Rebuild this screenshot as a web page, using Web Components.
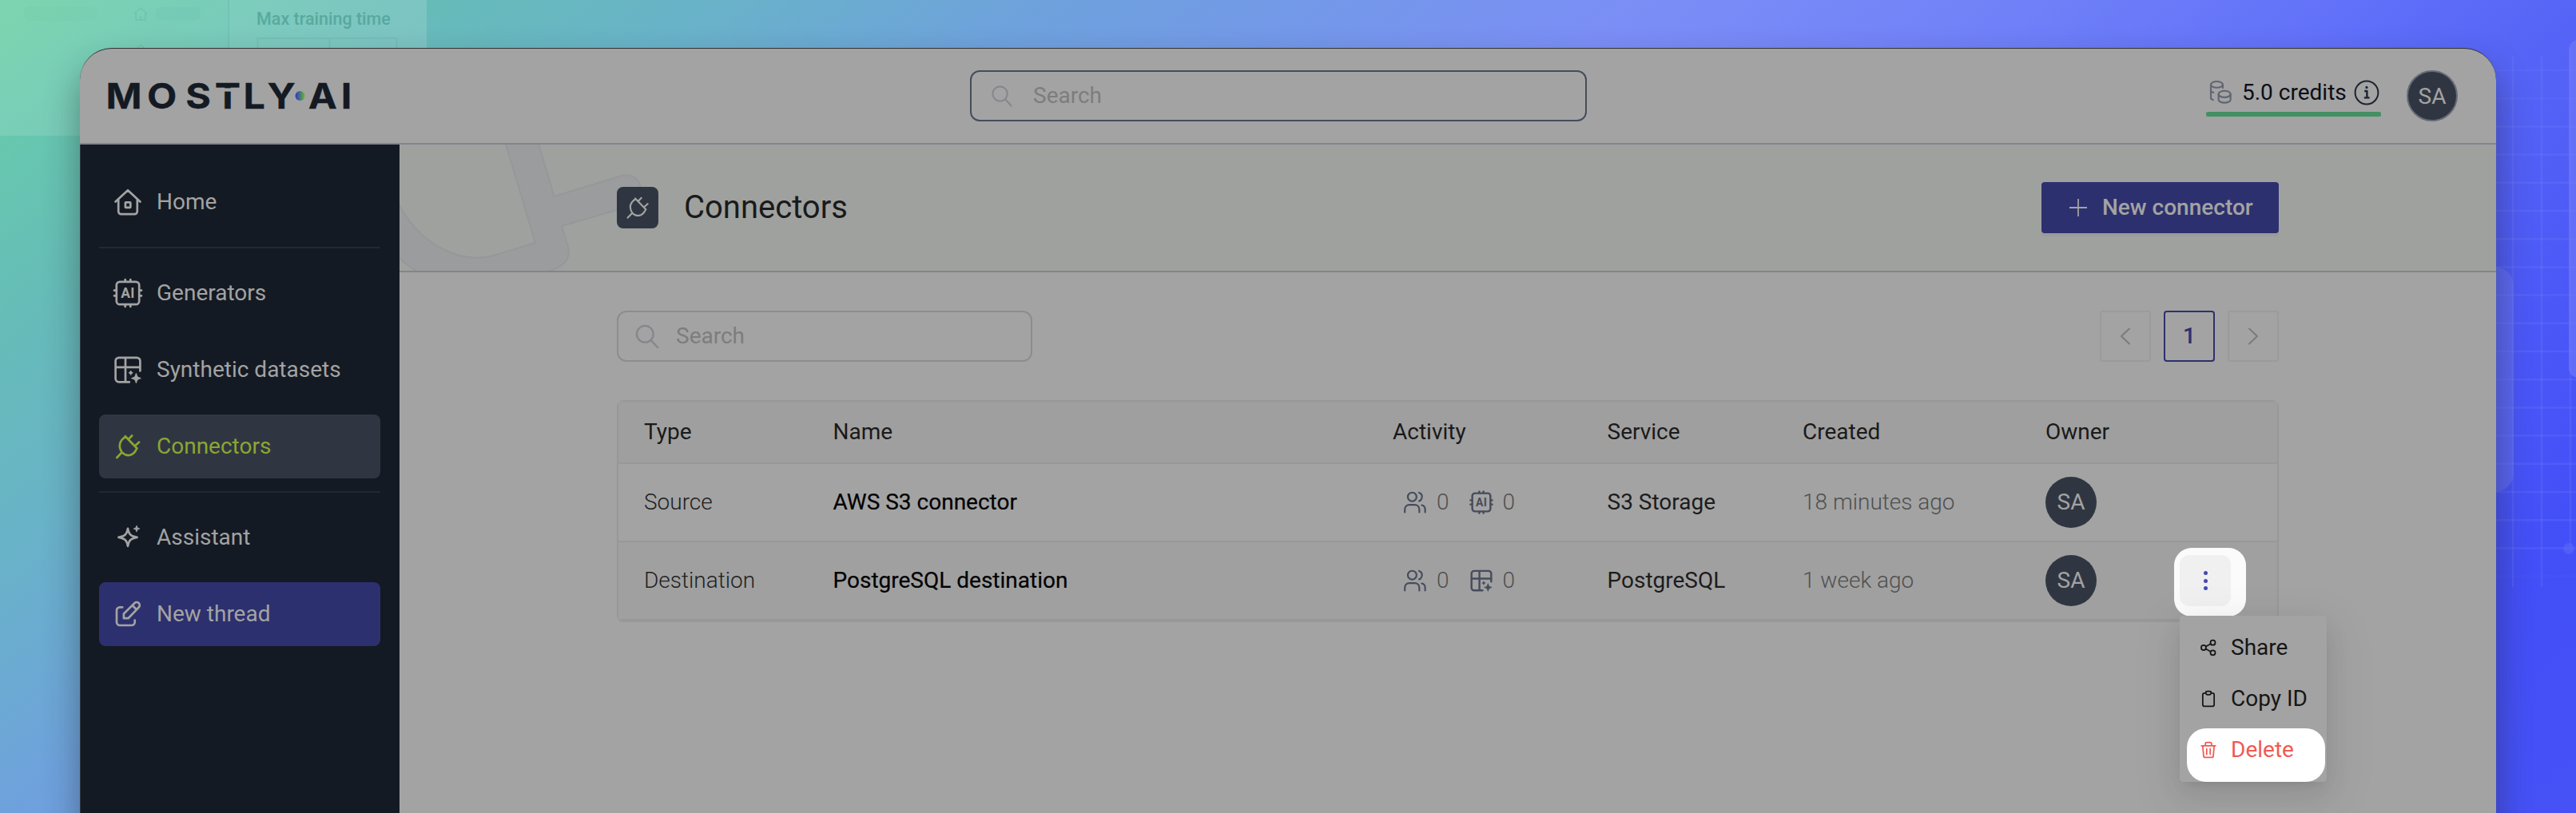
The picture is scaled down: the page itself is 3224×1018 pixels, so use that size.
<!DOCTYPE html>
<html lang="en">
<head>
<meta charset="utf-8">
<title>Connectors</title>
<style>
html,body{margin:0;height:100%;overflow:hidden}
body{font-family:Roboto,"Liberation Sans",sans-serif;font-size:28px;line-height:34px;color:#1c1c1c}
</style>
</head>
<body>
<desktop-stage>
  <app-window>
    <app-header slot="header"></app-header>
    <side-nav slot="nav">
      <nav-item icon="home">Home</nav-item>
      <nav-divider></nav-divider>
      <nav-item icon="chip">Generators</nav-item>
      <nav-item icon="table">Synthetic datasets</nav-item>
      <nav-item icon="plug" active>Connectors</nav-item>
      <nav-divider></nav-divider>
      <nav-item icon="spark">Assistant</nav-item>
      <nav-item icon="edit" primary>New thread</nav-item>
    </side-nav>
    <page-header slot="main">Connectors</page-header>
    <connector-page slot="main"></connector-page>
  </app-window>
</desktop-stage>
<script>
const ICONS = {
  home: '<path d="M4.6 19.6 20 5.2l15.4 14.4M8.2 17.5v14.3a3.4 3.4 0 0 0 3.4 3.4h16.8a3.4 3.4 0 0 0 3.4-3.4V17.5"/><rect x="16.9" y="20.3" width="6.4" height="6.6" rx=".6"/>',
  chip: '<rect x="5.8" y="5.8" width="28.4" height="28.4" rx="4.2"/><path d="M16.7 3v2M23.3 3v2M16.7 35v2M23.3 35v2M3 16.7h2M3 23.3h2M35 16.7h2M35 23.3h2"/><text x="20" y="26.200" text-anchor="middle" font-family="Roboto" font-weight="700" font-size="17.500" letter-spacing=".4" fill="currentColor" stroke="none">AI</text>',
  table: '<path d="M35.4 21.5V9a4.2 4.2 0 0 0-4.2-4.2H8.8A4.2 4.2 0 0 0 4.6 9v22.2a4.2 4.2 0 0 0 4.2 4.2h13M17 4.8v30.6M4.6 16.8h30.8"/><path fill="currentColor" stroke-width="1.400" d="M30.4 25c.8 3.8 1.700 4.800 5.500 5.600-3.800.8-4.700 1.800-5.500 5.600-.8-3.800-1.700-4.800-5.500-5.600 3.800-.8 4.700-1.800 5.500-5.600ZM23.700 21.600c.3 1.500.7 1.900 2.100 2.200-1.400.3-1.800.7-2.100 2.200-.3-1.500-.7-1.900-2.100-2.200 1.400-.3 1.800-.7 2.100-2.200Z"/>',
  plug: '<path d="M16.700 7.200 31.500 22.500M16.900 8.200C9 13 8 20.500 12.600 27.400c5.600 5.800 13.500 5 18-3.600M6.300 34l6.300-6.600M20.800 11.200l4.400-4.700M28.800 19.400l5.200-4.700"/>',
  spark: '<path d="M20 8.800c1.300 7.400 3.600 9.700 11.600 11-8 1.300-10.300 3.700-11.600 11-1.300-7.300-3.600-9.700-11.600-11 8-1.300 10.300-3.600 11.600-11Z"/><path fill="currentColor" stroke-width="1.200" d="M31 5.400c.6 2.500 1 3 3.600 3.600-2.600.6-3 1.100-3.600 3.600-.6-2.500-1-3-3.600-3.600 2.600-.6 3-1.100 3.600-3.600Z"/>',
  edit: '<path d="M13.200 11.400H10a4 4 0 0 0-4 4V30a4 4 0 0 0 4 4h14.700a4 4 0 0 0 4-4v-2.500M14.900 25.200V19.500L28.400 6.200a3.700 3.700 0 0 1 5.300 5.300L20.500 25.200ZM25.600 9l5.300 5.300"/>',
  search: '<circle cx="17" cy="17" r="11.500"/><path d="m25 25.400 9.600 10.200"/>',
  coins: '<ellipse cx="13.500" cy="7.600" rx="9.600" ry="5"/><path d="M3.900 7.600V29c0 1.700 1.300 2.800 3.600 3.300M3.900 18c.8 1.400 2.200 2 4.200 2.400M23.100 7.600V13"/><ellipse cx="26" cy="23" rx="9.700" ry="5.300"/><path d="M16.300 23v9c0 2.800 4.300 5 9.700 5s9.700-2.200 9.700-5V23"/>',
  info: '<circle cx="20" cy="20" r="18"/><path stroke-width="3" stroke-linecap="butt" d="M16.500 17.500h4v10M16 28h8.500"/><circle cx="20" cy="11.800" r="1.300" fill="currentColor" stroke-width="1.500"/>',
  people: '<circle cx="15.500" cy="11.500" r="6.800"/><path d="M4 35.500v-4.200c0-4.500 3-7.300 7.200-7.300h8.300c4.300 0 7.200 2.800 7.200 7.300v4.200M26.300 4.900c5.700 1.700 6.500 10.800 0 13.200M30.500 24.400c3.400.8 5.300 3.300 5.300 6.900v4.200"/>',
  share: '<circle cx="9" cy="20" r="5.500"/><circle cx="30" cy="8.500" r="5.500"/><circle cx="30" cy="31.500" r="5.500"/><path d="m14 17.300 11.200-6.100M14 22.700l11.200 6.200"/>',
  clip: '<path d="M14 7h-3a4 4 0 0 0-4 4v22a4 4 0 0 0 4 4h18a4 4 0 0 0 4-4V11a4 4 0 0 0-4-4h-3M14 5.500c0-1.500.8-2.500 2.500-2.500h7c1.700 0 2.500 1 2.500 2.500S25 10.500 22 10.500h-4c-3 0-4-3.500-4-5Z"/>',
  trash: '<path d="M4 10.500h32M13 10V6a3 3 0 0 1 3-3h8a3 3 0 0 1 3 3v4M7 11l2 23a3 3 0 0 0 3 3h16a3 3 0 0 0 3-3l2-23M16 17.500v12.500M24 17.500v12.500"/>',
  plus: '<path stroke-linecap="butt" d="M20 0v40M0 20h40"/>',
  left: '<path d="M30 1 10 20l20 19"/>',
  right: '<path d="m10 1 20 19-20 19"/>'
};

function define(name, render) {
  customElements.define(name, class extends HTMLElement {
    connectedCallback() {
      if (this.shadowRoot) return;
      const t = document.createElement('template');
      t.innerHTML = render(this);
      this.attachShadow({mode: 'open'}).append(t.content.cloneNode(true));
    }
  });
}

define('ui-icon', el => `<style>:host{display:block;flex:none;width:${el.getAttribute('size') || 40}px;height:${el.getAttribute('size') || 40}px}
svg{display:block;width:100%;height:100%;overflow:visible}</style>
<svg viewBox="0 0 40 40" fill="none" stroke="currentColor" stroke-width="${el.getAttribute('weight') || 2.7}" stroke-linecap="round" stroke-linejoin="round">${ICONS[el.getAttribute('name')]}</svg>`);

define('desktop-stage', () => {
  let grid = '';
  for (let i = 0; i < 19; i++) grid += `<path d="M3110 ${88 + i * 35.2}H3224" opacity="${i > 17 ? .25 : i < 2 ? .6 : 1}"/>`;
  return `<style>:host{display:block;position:relative;box-sizing:border-box;height:1018px;padding:60px 100px 0;overflow:hidden;
background:linear-gradient(142deg,#6acfa4 0%,#67c7af 5.600%,#66bcb8 11.700%,#69b2c9 20%,#6ea2dc 28.700%,#7497ea 37.600%,#7b8ef6 45.500%,#7182f8 55.300%,#606ff9 66.300%,#5766f6 70.700%,#4c59f7 80.600%,#434ff7 90%,#4652f6 100%)}
.art{position:absolute;left:0;top:0}</style>
<svg class="art" width="3224" height="1018" fill="none">
<rect width="534" height="170" fill="#fff" opacity=".12"/><rect x="286" width="248" height="170" fill="#fff" opacity=".03"/>
<path d="M286 0v60" stroke="#5fa79c" stroke-width="2" opacity=".25"/>
<rect x="195" y="9" width="56" height="16" rx="6" fill="#6cc4ae" opacity=".25"/><rect x="30" y="8" width="92" height="18" rx="8" fill="#6cc8a8" opacity=".12"/>
<path d="m168 17 8-7 8 7M170 16v9h12v-9M176 20v5M168 64l8-8 8 8" stroke="#5fae9c" stroke-width="1.500" opacity=".35"/>
<path d="M322.500 62V48h174v14M412.500 48v14" stroke="#5fae9f" stroke-width="2" opacity=".3"/>
<text x="321" y="31" font-size="21.500" font-weight="500" fill="#4d9f93" opacity=".75">Max training time</text>
<g stroke="#7c88ff" stroke-width="2.500" stroke-opacity=".2">${grid}<path d="M3145 70V735M3181 70V735M3217 60V690"/></g>
<circle cx="3215" cy="687" r="7" fill="#5e6bfb" opacity=".5"/>
<rect x="3060" y="334" width="86" height="282" rx="24" fill="#717bee" opacity=".42"/>
<rect x="3215" y="50" width="60" height="423" rx="12" fill="#727cf8" opacity=".6"/>
</svg><slot></slot>`;
});

define('app-window', () => `<style>:host{display:flex;flex-direction:column;position:relative;height:1010px;background:#a3a3a3;border-top:1px solid #333;border-radius:40px 40px 0 0;overflow:hidden;box-sizing:border-box;box-shadow:0 24px 44px rgba(30,30,30,.42)}
.body{display:flex;flex:1}.main{flex:1;display:flex;flex-direction:column}</style>
<slot name="header"></slot><div class="body"><slot name="nav"></slot><div class="main"><slot name="main"></slot></div></div>`);

define('brand-logo', () => `<style>:host{display:block}svg{display:block;overflow:visible}</style>
<svg width="310" height="72" viewBox="132 84 310 72"><defs><linearGradient id="g"><stop offset=".15" stop-color="#3d43b4"/><stop offset=".55" stop-color="#43807a"/><stop offset="1" stop-color="#7fae2c"/></linearGradient></defs>
<text transform="scale(1.1 1)" y="136" x="120.500 167.300 211.200 244.400 276.900 304.100 333 350.600 387.900" font-family="Inter" font-weight="700" font-size="44" fill="#141a23" stroke="#141a23" stroke-width=".3">MOSTLY AI</text>
<rect x="267" y="110.400" width="35" height="4.200" fill="#a3a3a3"/><circle cx="375.500" cy="120" r="6" fill="url(#g)"/></svg>`);

define('search-box', el => `<style>:host{display:flex;align-items:center;box-sizing:border-box;height:64px;border:2px solid ${el.hasAttribute('strong') ? '#454d5b' : '#8d8d8d'};border-radius:12px;color:#7d7d7d}
ui-icon{color:#86868d}</style><ui-icon name="search" size="${el.hasAttribute('strong') ? 32 : 36}" weight="2.600"></ui-icon><span>Search</span>`);

define('user-avatar', el => `<style>:host{display:flex;flex:none;align-items:center;justify-content:center;box-sizing:border-box;width:64px;height:64px;border-radius:50%;background:#303641;color:#a3a3a3;${el.hasAttribute('ring') ? 'border:2px solid #666c76;padding-top:2px' : ''}}</style>SA`);

define('app-header', () => `<style>:host{display:flex;align-items:center;box-sizing:border-box;height:120px;flex:none;padding:0 48px 0 32px;border-bottom:2px solid #84848b}
brand-logo{width:1082px;flex:none}
search-box{width:772px;padding-left:22px;gap:23px}
.credits{margin-left:auto;width:219px;padding-top:4px;box-sizing:border-box}
.row{display:flex;align-items:center;height:34px;padding-left:3px;color:#0c0d16;gap:9px}
.row ui-icon+span{margin-left:2px}
.bar{height:6px;border-radius:2px;background:#449063;margin-top:7px}
user-avatar{margin-left:32px}</style>
<brand-logo></brand-logo><search-box strong></search-box>
<div class="credits"><div class="row"><ui-icon name="coins" size="31" weight="2.800" style="color:#5f6672"></ui-icon><span>5.0 credits</span><ui-icon name="info" size="32" weight="2.500" style="color:#1d2430"></ui-icon></div><div class="bar"></div></div>
<user-avatar ring></user-avatar>`);

define('side-nav', () => `<style>:host{display:flex;flex-direction:column;gap:16px;box-sizing:border-box;width:400px;flex:none;padding:32px 24px 32px 23px;background:#141a23;border-left:1px solid #33383f}</style><slot></slot>`);

define('nav-divider', () => `<style>:host{display:block;height:2px;background:#222833}</style>`);

define('nav-item', el => `<style>:host{display:flex;align-items:center;gap:16px;height:80px;padding:0 16px;border-radius:8px;color:#a3a3a3}
:host([active]){background:#303641;color:#8ca534}:host([primary]){background:#2d306e}</style>
<ui-icon name="${el.getAttribute('icon')}"></ui-icon><span><slot></slot></span>`);

define('page-header', () => `<style>:host{display:flex;position:relative;align-items:center;box-sizing:border-box;height:160px;padding:0 272px 0;background:#9fa19f;border-bottom:2px solid #84848b;overflow:hidden;flex:none}
.mark{position:absolute;left:0;top:0}
.tile{position:relative;display:flex;align-items:center;justify-content:center;width:52px;height:52px;border-radius:8px;background:#303641;color:#a3a3a3;margin-right:32px}
h1{position:relative;margin:0;font-weight:400;font-size:40px;line-height:48px;color:#1a1a1a}
.btn{margin-left:auto;display:flex;align-items:center;box-sizing:border-box;width:297px;height:64px;padding-left:35px;gap:19px;border-radius:4px;background:#2d306e;color:#a3a3a3;font-weight:500;box-shadow:0 4px 0 rgba(0,0,0,.03)}</style>
<svg class="mark" width="340" height="160" viewBox="500 181 340 160"><path d="M632 177 670 304 624 318C576 334 524 306 496 250V320Q508 331 523 341H682Q717 332 711 309L703 283 772 263 802 250V234Q796 216 778 220L693.500 246 673 177Z" fill="#9b9c9e" stroke="#969799" stroke-width="2"/></svg>
<div class="tile"><ui-icon name="plug" size="36" weight="2.400"></ui-icon></div><h1><slot></slot></h1>
<div class="btn"><ui-icon name="plus" size="22" weight="3.200"></ui-icon><span>New connector</span></div>`);

define('page-box', () => `<style>:host{display:flex;align-items:center;justify-content:center;box-sizing:border-box;width:64px;height:64px;border:2px solid #9b9b9b;border-radius:4px;color:#7b7b7b}
:host([current]){border-color:#2d306e;color:#2d306e;font-weight:500}</style><slot></slot>`);

define('connector-page', () => `<style>:host{display:flex;flex-direction:column;gap:48px;padding:48px 272px}
.tools{display:flex;align-items:center;gap:16px}
search-box{width:520px;padding-left:18px;gap:18px;margin-right:auto}</style>
<div class="tools"><search-box></search-box><page-box><ui-icon name="left" size="20" weight="4"></ui-icon></page-box><page-box current>1</page-box><page-box><ui-icon name="right" size="20" weight="4"></ui-icon></page-box></div>
<connector-table></connector-table>`);

const rows = [
  ['Source', 'AWS S3 connector', 'chip', 'S3 Storage', '18 minutes ago'],
  ['Destination', 'PostgreSQL destination', 'table', 'PostgreSQL', '1 week ago']
];
define('connector-table', () => `<style>:host{display:block;border:2px solid #989898;border-bottom-width:4px;border-radius:8px}
.row{display:grid;grid-template-columns:236.500px 700.500px 268.500px 244.500px 304px 168px 64px;align-items:center;height:96px;padding-left:32px}
.row+.row{border-top:2px solid #989898}
.head{height:76px;background:#9f9f9f;color:#1a1a1a}
.alt{background:#a0a0a0}
.type{font-weight:300;color:#1f1f1f}.name{color:#000;-webkit-text-stroke:.2px #000}.ago{font-weight:300;color:#505050}
.act{display:flex;align-items:center;padding-left:12px;color:#505050;font-weight:300}
.act ui-icon{margin-right:11px;color:#454c5b}.act ui-icon+span{margin-right:24px}</style>
<div class="row head"><span>Type</span><span>Name</span><span>Activity</span><span>Service</span><span>Created</span><span>Owner</span></div>
${rows.map((r, i) => `<div class="row${i ? ' alt' : ''}"><span class="type">${r[0]}</span><span class="name">${r[1]}</span>
<div class="act"><ui-icon name="people" size="32"></ui-icon><span>0</span><ui-icon name="${r[2]}" size="32" weight="3"></ui-icon><span>0</span></div>
<span>${r[3]}</span><span class="ago">${r[4]}</span><user-avatar></user-avatar>${i ? '<row-actions></row-actions>' : ''}</div>`).join('')}`);

define('row-actions', () => `<style>:host{display:block;position:relative;width:64px;height:64px}
.spot{position:absolute;left:-7px;top:-9px;width:90px;height:86px;border-radius:22px;background:#fbfbfb}
.btn{position:relative;display:flex;flex-direction:column;align-items:center;justify-content:center;gap:4.300px;width:64px;height:64px;border-radius:12px;background:#f0f0f0}
.btn i{width:5px;height:5px;border-radius:50%;background:#434bb2}
.menu{position:absolute;left:0;top:76px;width:184px;box-sizing:border-box;padding:8px 0;border-radius:4px;background:#a3a3a3;box-shadow:0 12px 32px rgba(0,0,0,.08),0 6px 12px -8px rgba(0,0,0,.12),0 18px 56px 16px rgba(0,0,0,.05)}</style>
<div class="spot"></div><div class="btn"><i></i><i></i><i></i></div>
<div class="menu"><menu-item icon="share">Share</menu-item><menu-item icon="clip">Copy ID</menu-item><menu-item icon="trash" danger>Delete</menu-item></div>`);

define('menu-item', el => `<style>:host{display:flex;position:relative;align-items:center;gap:17px;height:64px;padding-left:25px;color:#161616}
:host([danger]){color:#f05a54}
:host([danger])::before{content:"";position:absolute;left:9px;top:5px;right:2px;bottom:-8px;border-radius:24px;background:#fff}
ui-icon,span{position:relative}span{white-space:nowrap}</style><ui-icon name="${el.getAttribute('icon')}" size="22" weight="3.200"></ui-icon><span><slot></slot></span>`);
</script>
</body>
</html>
